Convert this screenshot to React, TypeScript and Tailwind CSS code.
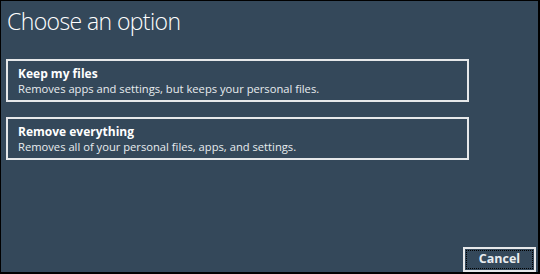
export default function App() {
  const options = [
    {
      title: "Keep my files",
      desc: "Removes apps and settings, but keeps your personal files.",
    },
    {
      title: "Remove everything",
      desc: "Removes all of your personal files, apps, and settings.",
    },
  ];

  return (
    <div
      className="w-[540px] h-[274px] bg-black pt-px pl-px pr-[2px] pb-[2px]"
      style={{ fontFamily: '"Open Sans", "Noto Sans", sans-serif' }}
    >
      <div className="w-full h-full bg-[#34485a] flex flex-col text-white">
        <h1 className="ml-[6px] mt-[5px] text-[23px] font-light leading-[30px] tracking-[-0.6px]">
          Choose an option
        </h1>

        <div className="mt-[23px] ml-[5px] flex flex-col gap-[15px]">
          {options.map((o) => (
            <div
              key={o.title}
              className="w-[463px] h-[43px] border-2 border-[#e6e8ea] pl-[10px] flex flex-col justify-center"
            >
              <div className="text-[12px] font-bold leading-[15px]">{o.title}</div>
              <div className="text-[11.2px] leading-[15px] text-[#e8ecef]">{o.desc}</div>
            </div>
          ))}
        </div>

        <div className="mt-auto flex justify-end pr-[2px]">
          <button className="w-[73px] h-[25px] border-2 border-[#e6e8ea] bg-[#34485a] p-px">
            <span className="w-full h-full border border-dotted border-black flex items-center justify-center text-[12.5px] font-bold text-[#e8ecef]">
              Cancel
            </span>
          </button>
        </div>
      </div>
    </div>
  );
}
